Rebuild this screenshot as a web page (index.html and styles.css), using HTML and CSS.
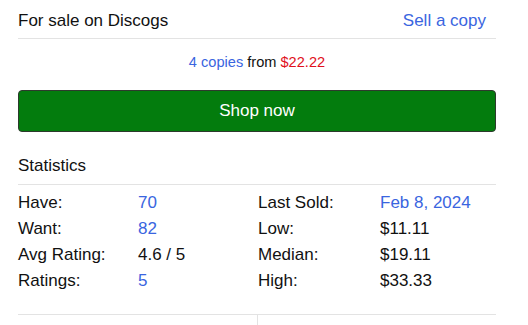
FILE: index.html
```html
<!DOCTYPE html>
<html>
<head>
<meta charset="utf-8">
<link rel="stylesheet" href="styles.css">
</head>
<body>
<div class="panel">
  <div class="head">
    <span class="title">For sale on Discogs</span>
    <a class="link sell">Sell a copy</a>
  </div>
  <div class="summary"><a class="link">4 copies</a> from <span class="price">$22.22</span></div>
  <button class="shop">Shop now</button>
  <div class="stats-head"><span class="title">Statistics</span></div>
  <div class="stats">
    <dl class="col col-left">
      <dt>Have:</dt><dd><a class="link">70</a></dd>
      <dt>Want:</dt><dd><a class="link">82</a></dd>
      <dt>Avg Rating:</dt><dd>4.6 / 5</dd>
      <dt>Ratings:</dt><dd><a class="link">5</a></dd>
    </dl>
    <dl class="col col-right">
      <dt>Last Sold:</dt><dd><a class="link">Feb 8, 2024</a></dd>
      <dt>Low:</dt><dd>$11.11</dd>
      <dt>Median:</dt><dd>$19.11</dd>
      <dt>High:</dt><dd>$33.33</dd>
    </dl>
  </div>
  <div class="foot">
    <div class="foot-cell"></div>
    <div class="foot-cell"></div>
  </div>
</div>
</body>
</html>
```
FILE: styles.css
```css
html, body { margin: 0; padding: 0; background: #fff; }
body { font-family: "Liberation Sans", Arial, sans-serif; color: #111; }
.panel { width: 478px; margin-left: 18px; }
.head { display: flex; justify-content: space-between; align-items: flex-start; padding: 11px 0 7px; border-bottom: 1px solid #e3e3e3; line-height: 20px; }
.title { font-size: 17px; color: #111; line-height: 20px; }
.link { color: #3a65e0; text-decoration: none; }
.sell { font-size: 17px; margin-right: 10px; }
.summary { text-align: center; font-size: 14.6px; margin-top: 13px; line-height: 20px; }
.price { color: #e0101b; }
.shop { display: block; width: 100%; height: 42px; margin-top: 18px; background: #037c0d; border: 1px solid #2d3a2d; border-radius: 4px; color: #fff; font-family: inherit; font-size: 17px; line-height: 20px; padding: 0; }
.stats-head { margin-top: 24px; padding-bottom: 8px; border-bottom: 1px solid #e3e3e3; line-height: 20px; }
.stats { display: grid; grid-template-columns: 240px 238px; padding-top: 5px; }
.col { display: grid; align-content: start; margin: 0; font-size: 17px; line-height: 26px; }
.col-left { grid-template-columns: 120px 1fr; }
.col-right { grid-template-columns: 122px 1fr; }
.col dt, .col dd { margin: 0; }
.foot { display: grid; grid-template-columns: 240px 238px; border-top: 1px solid #e3e3e3; margin-top: 20px; height: 11px; }
.foot-cell:first-child { border-right: 1px solid #e3e3e3; }
```
